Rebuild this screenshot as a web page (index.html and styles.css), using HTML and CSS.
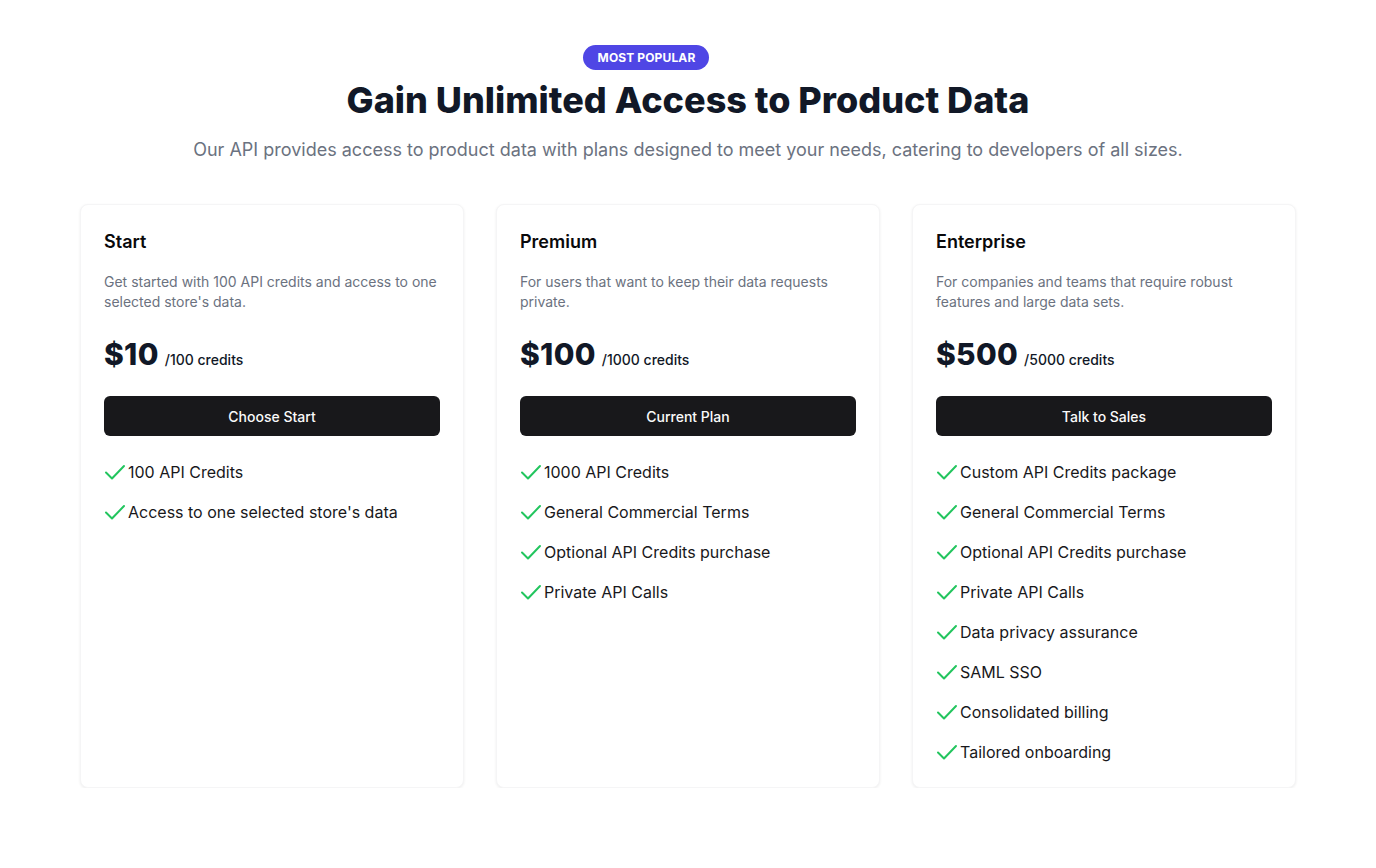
FILE: index.html
```html
<!DOCTYPE html>
<html lang="en">
<head>
<meta charset="utf-8">
<title>Pricing</title>
<link rel="stylesheet" href="styles.css">
</head>
<body>
<main class="page">
  <header class="intro">
    <span class="badge">Most Popular</span>
    <h1 class="title">Gain Unlimited Access to Product Data</h1>
    <p class="subtitle">Our API provides access to product data with plans designed to meet your needs, catering to developers of all sizes.</p>
  </header>
  <section class="plans">
    <article class="card">
      <h2 class="plan-name">Start</h2>
      <p class="plan-desc">Get started with 100 API credits and access to one selected store's data.</p>
      <div class="price"><span class="amount">$10</span><span class="unit">/100 credits</span></div>
      <button class="btn">Choose Start</button>
      <ul class="features">
        <li><svg class="check" viewBox="0 0 22 16"><path d="M2 8.5 8 14.5 20 2"/></svg>100 API Credits</li>
        <li><svg class="check" viewBox="0 0 22 16"><path d="M2 8.5 8 14.5 20 2"/></svg>Access to one selected store's data</li>
      </ul>
    </article>
    <article class="card">
      <h2 class="plan-name">Premium</h2>
      <p class="plan-desc">For users that want to keep their data requests private.</p>
      <div class="price"><span class="amount">$100</span><span class="unit">/1000 credits</span></div>
      <button class="btn">Current Plan</button>
      <ul class="features">
        <li><svg class="check" viewBox="0 0 22 16"><path d="M2 8.5 8 14.5 20 2"/></svg>1000 API Credits</li>
        <li><svg class="check" viewBox="0 0 22 16"><path d="M2 8.5 8 14.5 20 2"/></svg>General Commercial Terms</li>
        <li><svg class="check" viewBox="0 0 22 16"><path d="M2 8.5 8 14.5 20 2"/></svg>Optional API Credits purchase</li>
        <li><svg class="check" viewBox="0 0 22 16"><path d="M2 8.5 8 14.5 20 2"/></svg>Private API Calls</li>
      </ul>
    </article>
    <article class="card">
      <h2 class="plan-name">Enterprise</h2>
      <p class="plan-desc">For companies and teams that require robust features and large data sets.</p>
      <div class="price"><span class="amount">$500</span><span class="unit">/5000 credits</span></div>
      <button class="btn">Talk to Sales</button>
      <ul class="features">
        <li><svg class="check" viewBox="0 0 22 16"><path d="M2 8.5 8 14.5 20 2"/></svg>Custom API Credits package</li>
        <li><svg class="check" viewBox="0 0 22 16"><path d="M2 8.5 8 14.5 20 2"/></svg>General Commercial Terms</li>
        <li><svg class="check" viewBox="0 0 22 16"><path d="M2 8.5 8 14.5 20 2"/></svg>Optional API Credits purchase</li>
        <li><svg class="check" viewBox="0 0 22 16"><path d="M2 8.5 8 14.5 20 2"/></svg>Private API Calls</li>
        <li><svg class="check" viewBox="0 0 22 16"><path d="M2 8.5 8 14.5 20 2"/></svg>Data privacy assurance</li>
        <li><svg class="check" viewBox="0 0 22 16"><path d="M2 8.5 8 14.5 20 2"/></svg>SAML SSO</li>
        <li><svg class="check" viewBox="0 0 22 16"><path d="M2 8.5 8 14.5 20 2"/></svg>Consolidated billing</li>
        <li><svg class="check" viewBox="0 0 22 16"><path d="M2 8.5 8 14.5 20 2"/></svg>Tailored onboarding</li>
      </ul>
    </article>
  </section>
</main>
</body>
</html>
```

FILE: styles.css
```css
* { box-sizing: border-box; }
html, body { margin: 0; padding: 0; background: #ffffff; }
body {
  font-family: Inter, "Noto Sans", "Liberation Sans", sans-serif;
  color: #09090b;
}
.page {
  width: 1216px;
  margin: 0 auto;
  padding-top: 45px;
}
.intro {
  display: flex;
  flex-direction: column;
  align-items: center;
  text-align: center;
}
.badge {
  display: inline-block;
  margin-right: 84px;
  background: #4f46e5;
  color: #ffffff;
  font-size: 12px;
  font-weight: 700;
  text-transform: uppercase;
  line-height: 16px;
  padding: 5px 14px 4px 15px;
  border-radius: 9999px;
  letter-spacing: 0.01em;
}
.title {
  margin: 10px 0 0;
  font-size: 36px;
  line-height: 40px;
  font-weight: 800;
  color: #111827;
}
.subtitle {
  margin: 16px 0 0;
  font-size: 18px;
  line-height: 28px;
  color: #6b7280;
}
.plans {
  margin-top: 40px;
  display: grid;
  grid-template-columns: repeat(3, 1fr);
  gap: 32px;
}
.card {
  background: #ffffff;
  border: 1px solid #f5f5f6;
  border-radius: 8px;
  box-shadow: 0 1px 3px rgba(0, 0, 0, 0.07);
  padding: 23px 23px 23px;
  display: flex;
  flex-direction: column;
}
.plan-name {
  margin: 0;
  font-size: 18px;
  line-height: 28px;
  font-weight: 600;
  color: #09090b;
}
.plan-desc {
  margin: 16px 0 0;
  font-size: 14px;
  line-height: 20px;
  color: #6b7280;
}
.price {
  margin-top: 24px;
  display: flex;
  align-items: baseline;
  gap: 6px;
}
.amount {
  font-size: 30px;
  line-height: 36px;
  font-weight: 800;
  color: #111827;
  letter-spacing: 0.01em;
}
.unit {
  font-size: 14px;
  font-weight: 500;
  color: #111827;
}
.btn {
  margin-top: 24px;
  height: 40px;
  width: 100%;
  border: 0;
  border-radius: 6px;
  background: #18181b;
  color: #fafafa;
  font-family: inherit;
  font-size: 14px;
  font-weight: 500;
}
.features {
  list-style: none;
  margin: 24px 0 0;
  padding: 0;
  display: flex;
  flex-direction: column;
  gap: 16px;
}
.features li {
  display: flex;
  align-items: center;
  font-size: 16px;
  line-height: 24px;
  color: #18181b;
}
.check {
  width: 22px;
  height: 16px;
  margin-right: 2px;
  fill: none;
  stroke: #22c55e;
  stroke-width: 2;
  stroke-linecap: round;
  stroke-linejoin: round;
  flex-shrink: 0;
}
```
